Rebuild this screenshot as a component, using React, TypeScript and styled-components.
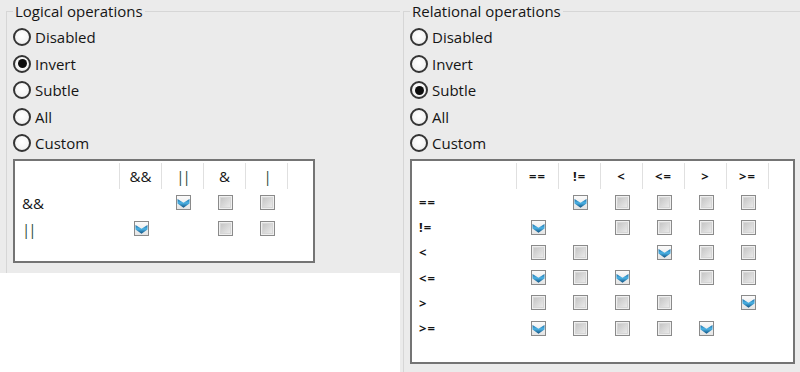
import React from "react";
import styled, { createGlobalStyle } from "styled-components";

const Global = createGlobalStyle`
  html, body { margin: 0; padding: 0; background: #ffffff; }
  body { font-family: "Open Sans", "Noto Sans", sans-serif; color: #151515; }
`;

const Page = styled.div`
  display: flex;
  align-items: flex-start;
  width: 800px;
  height: 372px;
  background: #ffffff;
  overflow: hidden;
`;

const Panel = styled.div<{ $h: number; $pl: number }>`
  width: 400px;
  height: ${(p) => p.$h}px;
  box-sizing: border-box;
  padding: 3px 0 0 ${(p) => p.$pl}px;
  background: #ebebeb;
`;

const Group = styled.fieldset`
  margin: 0;
  padding: 0 0 0 6px;
  min-width: 0;
  height: 100%;
  box-sizing: border-box;
  border: 1px solid #d6d6d6;
  border-right: none;
  border-bottom: none;
`;

const Legend = styled.legend`
  padding: 0 2px;
  font-size: 15px;
  font-weight: 500;
  line-height: 16px;
  color: #151515;
`;

const RadioList = styled.div`
  display: flex;
  flex-direction: column;
  margin-top: 5px;
`;

const RadioRow = styled.div`
  display: flex;
  align-items: center;
  gap: 4px;
  height: 26.5px;
  font-size: 15px;
  font-weight: 500;
  color: #151515;
`;

const RadioDot = styled.span<{ $on: boolean }>`
  width: 18px;
  height: 18px;
  box-sizing: border-box;
  border-radius: 50%;
  border: 2px solid #343434;
  background: radial-gradient(circle at 50% 40%, #ffffff 0%, #f4f4f4 60%, #e0e0e0 100%);
  display: flex;
  align-items: center;
  justify-content: center;
  &::after {
    content: "";
    display: ${(p) => (p.$on ? "block" : "none")};
    width: 9px;
    height: 9px;
    border-radius: 50%;
    background: #0d0d0d;
  }
`;

const TableBox = styled.div<{ $w: number; $h: number }>`
  margin-top: 2px;
  width: ${(p) => p.$w}px;
  height: ${(p) => p.$h}px;
  box-sizing: border-box;
  border: 2px solid #747474;
  background: #ffffff;
  padding-top: 1px;
`;

const Row = styled.div<{ $cols: number; $h: number }>`
  display: grid;
  grid-template-columns: 105px repeat(${(p) => p.$cols}, 42px);
  height: ${(p) => p.$h}px;
  align-items: center;
`;

const HeadCell = styled.div<{ $bold: boolean; $tint?: boolean }>`
  height: 26px;
  border-right: 1px solid #e0e0e0;
  display: flex;
  align-items: center;
  justify-content: center;
  font-size: ${(p) => (p.$bold ? "13px" : "15px")};
  font-weight: ${(p) => (p.$bold ? 700 : 500)};
  letter-spacing: ${(p) => (p.$bold ? "1px" : p.$tint ? "-2px" : "0")};
  color: ${(p) => (p.$tint ? "#2e4b3a" : "#151515")};
`;

const RowLabel = styled.div<{ $bold: boolean; $tint?: boolean }>`
  padding-left: 7px;
  font-size: ${(p) => (p.$bold ? "13px" : "15px")};
  font-weight: ${(p) => (p.$bold ? 700 : 500)};
  letter-spacing: ${(p) => (p.$bold ? "1px" : p.$tint ? "-2px" : "0")};
  color: ${(p) => (p.$tint ? "#2e4b3a" : "#151515")};
`;

const Cell = styled.div`
  display: flex;
  align-items: center;
  justify-content: center;
  height: 100%;
`;

type V = null | boolean;

const Box: React.FC<{ checked: boolean }> = ({ checked }) => (
  <svg width="15" height="15" viewBox="0 0 15 15">
    <defs>
      <linearGradient id="ubg" x1="0" y1="0" x2="1" y2="1">
        <stop offset="0" stopColor="#c4c4c4" />
        <stop offset="1" stopColor="#ebebeb" />
      </linearGradient>
      <linearGradient id="cbg" x1="0" y1="0" x2="0" y2="1">
        <stop offset="0" stopColor="#fbfbfb" />
        <stop offset="1" stopColor="#e4e4e4" />
      </linearGradient>
      <linearGradient id="chk" x1="0" y1="0" x2="0" y2="1">
        <stop offset="0" stopColor="#1b6fa6" />
        <stop offset="0.45" stopColor="#4cb3e6" />
        <stop offset="1" stopColor="#0f4f7e" />
      </linearGradient>
    </defs>
    <rect x="0.5" y="0.5" width="14" height="14" fill={checked ? "url(#cbg)" : "#efefef"} stroke="#8a8a8a" />
    {checked ? (
      <polygon points="1.5,4 7.5,7.8 13.5,4 13.5,8.5 7.5,12.8 1.5,8.5" fill="url(#chk)" />
    ) : (
      <rect x="2.5" y="2.5" width="10" height="10" fill="url(#ubg)" stroke="#d6d6d6" />
    )}
  </svg>
);

type Matrix = {
  cols: string[];
  rows: { label: string; vals: V[] }[];
};

const tintOf = (s: string) => s.includes("|");

const OpTable: React.FC<{ m: Matrix; bold: boolean; w: number; h: number; rowH: number }> = ({ m, bold, w, h, rowH }) => (
  <TableBox $w={w} $h={h}>
    <Row $cols={m.cols.length} $h={28}>
      <HeadCell $bold={bold} />
      {m.cols.map((c) => (
        <HeadCell key={c} $bold={bold} $tint={tintOf(c)}>
          {c}
        </HeadCell>
      ))}
    </Row>
    {m.rows.map((r) => (
      <Row key={r.label} $cols={m.cols.length} $h={rowH}>
        <RowLabel $bold={bold} $tint={tintOf(r.label)}>
          {r.label}
        </RowLabel>
        {r.vals.map((v, i) => (
          <Cell key={i}>{v === null ? null : <Box checked={v} />}</Cell>
        ))}
      </Row>
    ))}
  </TableBox>
);

const options = ["Disabled", "Invert", "Subtle", "All", "Custom"];

const Radios: React.FC<{ selected: string }> = ({ selected }) => (
  <RadioList>
    {options.map((o) => (
      <RadioRow key={o}>
        <RadioDot $on={o === selected} />
        <span>{o}</span>
      </RadioRow>
    ))}
  </RadioList>
);

const logical: Matrix = {
  cols: ["&&", "||", "&", "|"],
  rows: [
    { label: "&&", vals: [null, true, false, false] },
    { label: "||", vals: [true, null, false, false] },
  ],
};

const relational: Matrix = {
  cols: ["==", "!=", "<", "<=", ">", ">="],
  rows: [
    { label: "==", vals: [null, true, false, false, false, false] },
    { label: "!=", vals: [true, null, false, false, false, false] },
    { label: "<", vals: [false, false, null, true, false, false] },
    { label: "<=", vals: [true, false, true, null, false, false] },
    { label: ">", vals: [false, false, false, false, null, true] },
    { label: ">=", vals: [true, false, false, false, true, null] },
  ],
};

export default function App() {
  return (
    <>
      <Global />
      <Page>
        <Panel $h={273} $pl={6}>
          <Group>
            <Legend>Logical operations</Legend>
            <Radios selected="Invert" />
            <OpTable m={logical} bold={false} w={302} h={104} rowH={26} />
          </Group>
        </Panel>
        <Panel $h={372} $pl={3}>
          <Group>
            <Legend>Relational operations</Legend>
            <Radios selected="Subtle" />
            <OpTable m={relational} bold={true} w={385} h={205} rowH={25.2} />
          </Group>
        </Panel>
      </Page>
    </>
  );
}
